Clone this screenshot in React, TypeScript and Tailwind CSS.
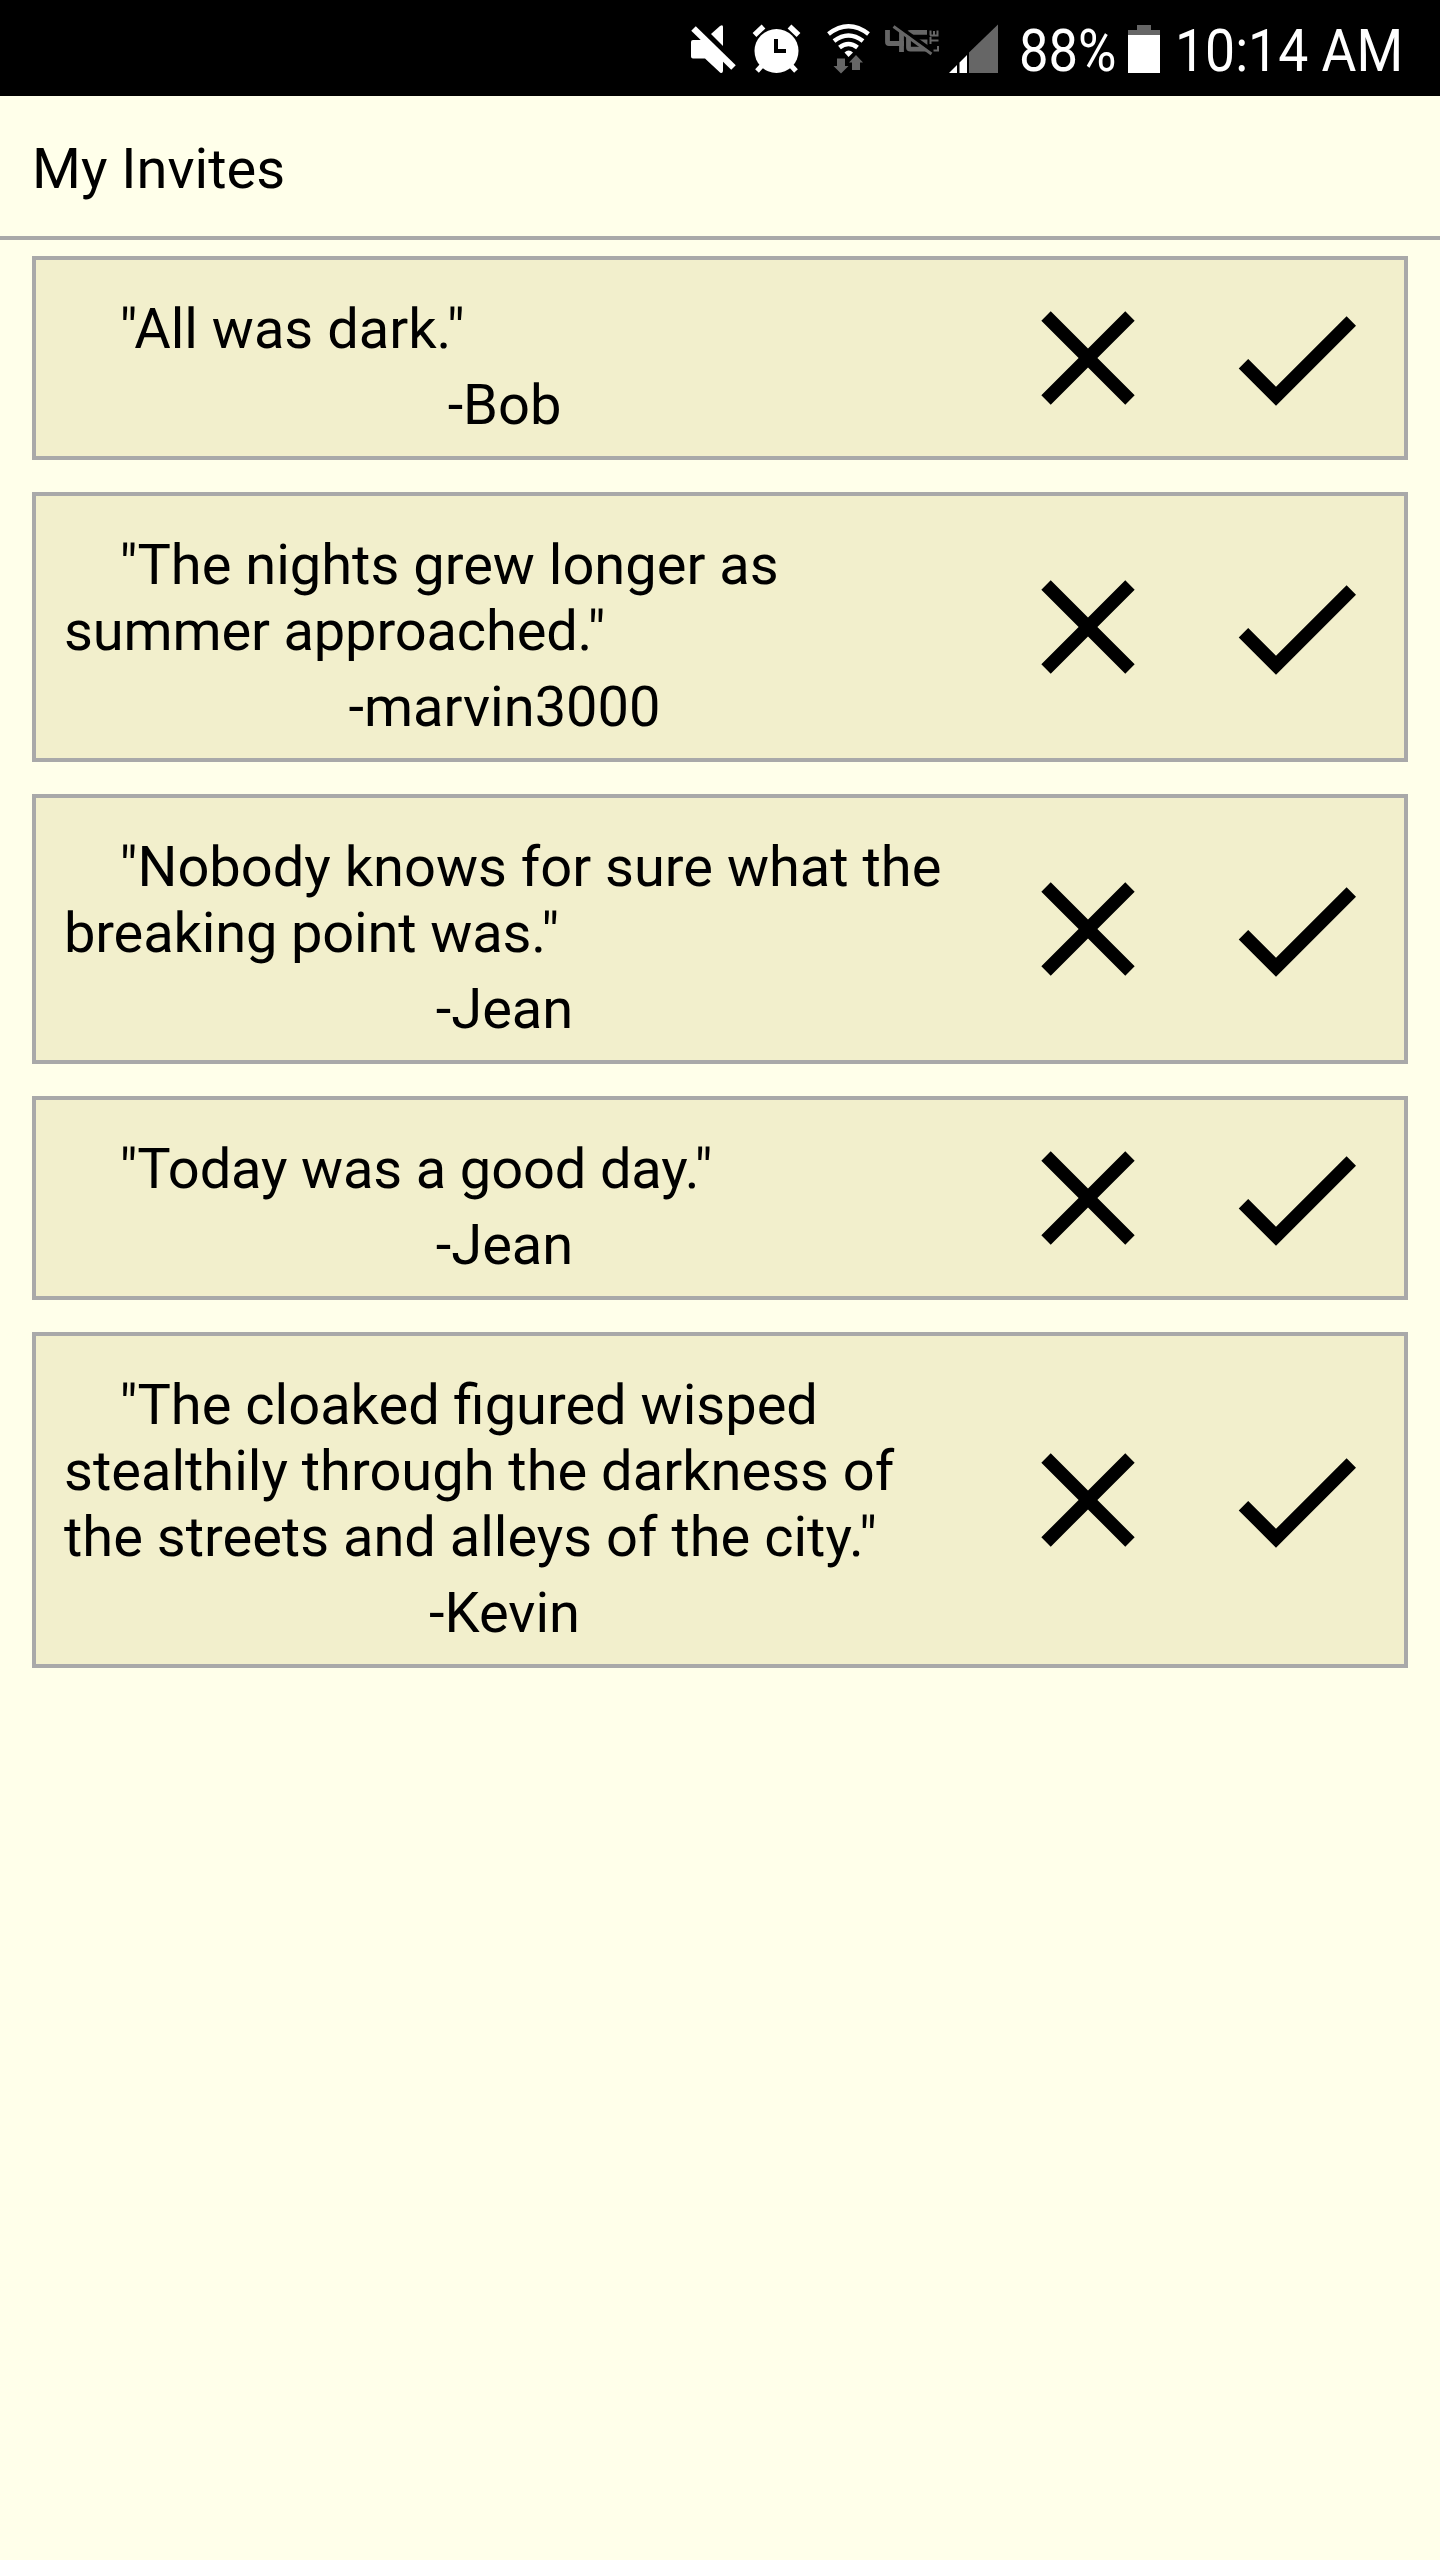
type Line = { text: string; tight?: boolean };

const invites: { lines: Line[]; author: string }[] = [
  { lines: [{ text: '"All was dark."' }], author: 'Bob' },
  {
    lines: [{ text: '"The nights grew longer as' }, { text: 'summer approached."', tight: true }],
    author: 'marvin3000',
  },
  {
    lines: [{ text: '"Nobody knows for sure what the' }, { text: 'breaking point was."', tight: true }],
    author: 'Jean',
  },
  { lines: [{ text: '"Today was a good day."', tight: true }], author: 'Jean' },
  {
    lines: [
      { text: '"The cloaked figured wisped' },
      { text: 'stealthily through the darkness of' },
      { text: 'the streets and alleys of the city."' },
    ],
    author: 'Kevin',
  },
];

function MuteIcon() {
  return (
    <svg className="h-24 w-[48px]" viewBox="690 0 48 96" fill="#fff">
      <path d="M711 34L720 26q3 -2 3 1V46z" />
      <path d="M691 42q0 -2 2 -2h12l18 18V71q-0.500 3 -3 1.500L705 58.500H693q-2 0 -2 -2z" />
      <path d="M693.500 28.500L733.500 67.500" stroke="#fff" strokeWidth="6.500" />
    </svg>
  );
}

function AlarmIcon() {
  return (
    <svg className="ml-[14px] h-24 w-[50px]" viewBox="752 0 50 96" fill="none" stroke="#fff">
      <circle cx="776.500" cy="51" r="22" fill="#fff" stroke="none" />
      <path d="M754.500 35L763.500 26.500M789.500 26.500L798.500 35" strokeWidth="5.500" />
      <path d="M757 71L763 64.500M796 71L790 64.500" strokeWidth="5" />
      <path d="M776 39V51H786" stroke="#000" strokeWidth="4" />
    </svg>
  );
}

function WifiIcon() {
  return (
    <svg className="ml-6 h-24 w-[46px]" viewBox="826 0 46 96" fill="none" stroke="#fff" strokeWidth="4.500">
      <path d="M828.500 34Q848.500 18.500 868.500 34" />
      <path d="M834 41Q848.500 30 863 41" />
      <path d="M839.500 47.500Q848.500 40.500 857.500 47.500" />
      <path d="M844.500 52.500Q848.500 48.500 853 52.500L848.500 57z" fill="#fff" stroke="none" />
      <g fill="#666" stroke="none">
        <path d="M837 58.500h8v7.500h3.500L841 73.500L833.500 66h3.500z" />
        <path d="M856 55L863 62.500h-3V70h-8V62.500h-3z" />
      </g>
    </svg>
  );
}

function NetworkIcon() {
  return (
    <svg className="ml-3 h-24 w-[56px]" viewBox="884 0 56 96" fill="none" stroke="#666">
      <path d="M887.500 30V42q0 1.500 1.500 1.500H904M901.500 30V52" strokeWidth="4.800" />
      <path d="M927 32.300H910.500q-2 0 -2 2V47.200q0 2 2 2H925V42H918" strokeWidth="4.800" />
      <path d="M895 24L934 52" stroke="#000" strokeWidth="4" />
      <path d="M893.500 26.500L931.500 54" strokeWidth="3" />
      <path
        d="M938 46V50.500H933.500M930.500 37V44M930.500 40.500H938.500M930.500 35.500V30.500M934 35.500V31M937.500 35.500V30.500M930 35.500H938.500"
        strokeWidth="2"
      />
    </svg>
  );
}

function SignalIcon() {
  return (
    <svg className="ml-2 h-24 w-[50px]" viewBox="948 0 50 96">
      <path d="M969 52.500L998 24.500V73H969z" fill="#666" />
      <path d="M949 73L957 65V73zM959.500 62.500L967 55V73H959.500z" fill="#fff" />
    </svg>
  );
}

function BatteryIcon() {
  return (
    <svg className="h-24 w-8" viewBox="1128 0 32 96">
      <path d="M1128 30h9V25h14V30h9V35h-32z" fill="#666" />
      <path d="M1128 35h32V73h-32z" fill="#fff" />
    </svg>
  );
}

function StatusBar() {
  return (
    <header className="flex h-24 items-center bg-black pl-[690px] text-[60px] leading-[70px] whitespace-nowrap text-white">
      <MuteIcon />
      <AlarmIcon />
      <WifiIcon />
      <NetworkIcon />
      <SignalIcon />
      <div className="ml-[21px] w-[109px] pt-[6px]">
        <span className="inline-block origin-left scale-x-[0.875]">88%</span>
      </div>
      <BatteryIcon />
      <div className="ml-[15px] pt-[6px]">
        <span className="inline-block origin-left scale-x-[0.892]">10:14 AM</span>
      </div>
    </header>
  );
}

function InviteCard({ lines, author }: { lines: Line[]; author: string }) {
  return (
    <li className="flex items-center border-4 border-[#a9a9a9] bg-[#f2efcc] px-7">
      <div className="w-[880px] pt-9 pb-[18px] whitespace-nowrap">
        {lines.map(({ text, tight }, i) => (
          <p key={text} className={`${i === 0 ? 'pl-[55.5px]' : ''} ${tight ? 'tracking-[-0.15px]' : ''}`}>
            {text}
          </p>
        ))}
        <p className="mt-[10px] pl-px text-center">{`-${author}`}</p>
      </div>
      <button className="ml-16 size-40" aria-label="Decline">
        <svg viewBox="0 0 24 24">
          <path d="M19 6.410L17.590 5 12 10.590 6.410 5 5 6.410 10.590 12 5 17.590 6.410 19 12 13.410 17.590 19 19 17.590 13.410 12z" />
        </svg>
      </button>
      <button className="mt-0.5 ml-12 size-40" aria-label="Accept">
        <svg viewBox="0 0 24 24">
          <path d="M9 16.170L4.830 12l-1.420 1.410L9 19 21 7l-1.410-1.410z" />
        </svg>
      </button>
    </li>
  );
}

export default function App() {
  return (
    <div className="h-[2560px] w-[1440px] bg-[#ffffea] font-['Roboto',sans-serif] text-[56px] leading-[66px] text-black">
      <StatusBar />
      <h1 className="border-b-4 border-[#a9a9a9] pt-10 pb-[34px] pl-8">My Invites</h1>
      <ul className="flex flex-col gap-8 px-8 pt-4">
        {invites.map((invite) => (
          <InviteCard key={invite.lines[0].text} {...invite} />
        ))}
      </ul>
    </div>
  );
}
